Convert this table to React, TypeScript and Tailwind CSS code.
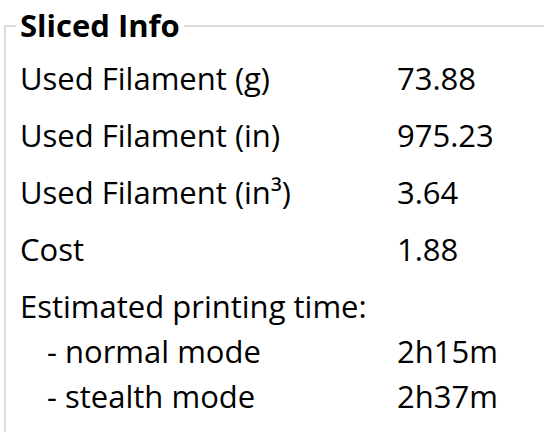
const rows: Array<[React.ReactNode, string]> = [
  ["Used Filament (g)", "73.88"],
  ["Used Filament (in)", "975.23"],
  ["Used Filament (in³)", "3.64"],
  ["Cost", "1.88"],
];

const times: Array<[string, string]> = [
  ["normal mode", "2h15m"],
  ["stealth mode", "2h37m"],
];

export default function App() {
  return (
    <div
      className="w-[544px] h-[432px] overflow-hidden bg-white pt-[10px] text-black"
      style={{ fontFamily: '"Open Sans", "Noto Sans", sans-serif' }}
    >
      {/* Sliced Info group box */}
      <fieldset className="ml-1 -mr-4 h-[480px] border-2 border-[#dcdcdc] pl-[10px]">
        <legend className="px-1 text-[31px] font-bold leading-[31px]">Sliced Info</legend>
        <div className="flex flex-col gap-3 pt-[15px] pl-1 text-[31px] leading-[45px]">
          {rows.map(([label, value], i) => (
            <div key={i} className="grid grid-cols-[377px_1fr]">
              <span>{label}</span>
              <span>{value}</span>
            </div>
          ))}
          <div>
            <div>Estimated printing time:</div>
            {times.map(([label, value]) => (
              <div key={label} className="grid grid-cols-[377px_1fr]">
                <span className="pl-[27px]">- {label}</span>
                <span>{value}</span>
              </div>
            ))}
          </div>
        </div>
      </fieldset>
    </div>
  );
}
